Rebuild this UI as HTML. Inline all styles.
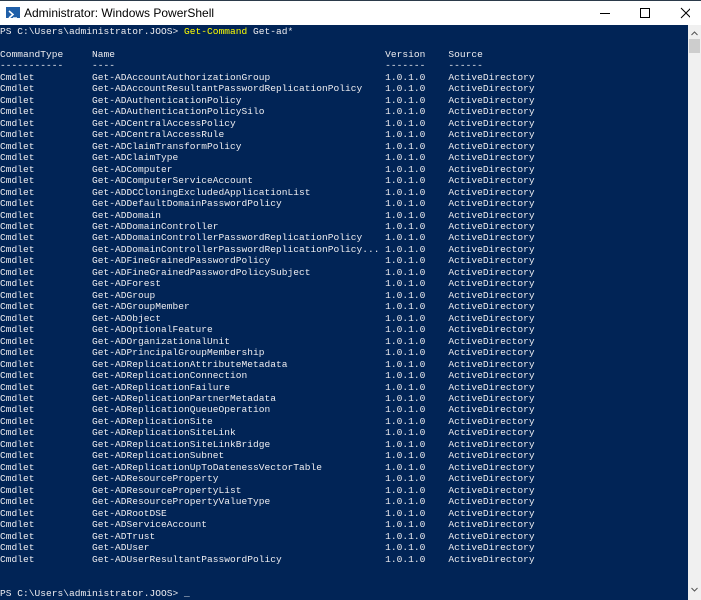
<!DOCTYPE html>
<html><head><style>
html,body{margin:0;width:701px;height:600px;overflow:hidden}
body{background:#012456;position:relative;font-family:"Liberation Sans",sans-serif}
#tb{position:absolute;left:0;top:0;width:701px;height:25px;background:#fff;border-top:1px solid #2b3a4a;box-sizing:border-box}
#tb .t{position:absolute;left:24px;top:5px;font-size:12px;color:#000}
#ic{position:absolute;left:6px;top:6px;width:14px;height:11px;background:#1f5fa8}
#sb{position:absolute;left:688px;top:25px;width:13px;height:575px;background:#f0f0f0}
pre{position:absolute;left:0;top:26px;margin:0;font-family:"Liberation Mono",monospace;font-size:9.55px;letter-spacing:0.02px;line-height:11.47px;color:#eeedf0}
.y{color:#ffff00}
</style></head><body>
<div id="tb"><div id="ic"><svg width="14" height="11"><path d="M3 2 L7 5.5 L3 9" stroke="#fff" stroke-width="1.6" fill="none"/><path d="M7 9 H11" stroke="#fff" stroke-width="1.4"/></svg></div><div class="t">Administrator: Windows PowerShell</div>
<svg style="position:absolute;left:600px;top:5px" width="90" height="15"><path d="M0 7.5H10" stroke="#000"/><rect x="40.5" y="2.5" width="9" height="9" fill="none" stroke="#000"/><path d="M81 2L91 12M91 2L81 12" stroke="#000"/></svg></div>
<div id="sb"><svg width="13" height="575"><path d="M3.5 10L6.5 7L9.5 10" stroke="#555" fill="none"/><rect x="1" y="14" width="11" height="14" fill="#cdcdcd"/><path d="M3.5 563L6.5 566L9.5 563" stroke="#555" fill="none"/></svg></div>
<pre>PS C:\Users\administrator.JOOS&gt; <span class="y">Get-Command</span> Get-ad*

CommandType     Name                                               Version    Source
-----------     ----                                               -------    ------
Cmdlet          Get-ADAccountAuthorizationGroup                    1.0.1.0    ActiveDirectory
Cmdlet          Get-ADAccountResultantPasswordReplicationPolicy    1.0.1.0    ActiveDirectory
Cmdlet          Get-ADAuthenticationPolicy                         1.0.1.0    ActiveDirectory
Cmdlet          Get-ADAuthenticationPolicySilo                     1.0.1.0    ActiveDirectory
Cmdlet          Get-ADCentralAccessPolicy                          1.0.1.0    ActiveDirectory
Cmdlet          Get-ADCentralAccessRule                            1.0.1.0    ActiveDirectory
Cmdlet          Get-ADClaimTransformPolicy                         1.0.1.0    ActiveDirectory
Cmdlet          Get-ADClaimType                                    1.0.1.0    ActiveDirectory
Cmdlet          Get-ADComputer                                     1.0.1.0    ActiveDirectory
Cmdlet          Get-ADComputerServiceAccount                       1.0.1.0    ActiveDirectory
Cmdlet          Get-ADDCCloningExcludedApplicationList             1.0.1.0    ActiveDirectory
Cmdlet          Get-ADDefaultDomainPasswordPolicy                  1.0.1.0    ActiveDirectory
Cmdlet          Get-ADDomain                                       1.0.1.0    ActiveDirectory
Cmdlet          Get-ADDomainController                             1.0.1.0    ActiveDirectory
Cmdlet          Get-ADDomainControllerPasswordReplicationPolicy    1.0.1.0    ActiveDirectory
Cmdlet          Get-ADDomainControllerPasswordReplicationPolicy... 1.0.1.0    ActiveDirectory
Cmdlet          Get-ADFineGrainedPasswordPolicy                    1.0.1.0    ActiveDirectory
Cmdlet          Get-ADFineGrainedPasswordPolicySubject             1.0.1.0    ActiveDirectory
Cmdlet          Get-ADForest                                       1.0.1.0    ActiveDirectory
Cmdlet          Get-ADGroup                                        1.0.1.0    ActiveDirectory
Cmdlet          Get-ADGroupMember                                  1.0.1.0    ActiveDirectory
Cmdlet          Get-ADObject                                       1.0.1.0    ActiveDirectory
Cmdlet          Get-ADOptionalFeature                              1.0.1.0    ActiveDirectory
Cmdlet          Get-ADOrganizationalUnit                           1.0.1.0    ActiveDirectory
Cmdlet          Get-ADPrincipalGroupMembership                     1.0.1.0    ActiveDirectory
Cmdlet          Get-ADReplicationAttributeMetadata                 1.0.1.0    ActiveDirectory
Cmdlet          Get-ADReplicationConnection                        1.0.1.0    ActiveDirectory
Cmdlet          Get-ADReplicationFailure                           1.0.1.0    ActiveDirectory
Cmdlet          Get-ADReplicationPartnerMetadata                   1.0.1.0    ActiveDirectory
Cmdlet          Get-ADReplicationQueueOperation                    1.0.1.0    ActiveDirectory
Cmdlet          Get-ADReplicationSite                              1.0.1.0    ActiveDirectory
Cmdlet          Get-ADReplicationSiteLink                          1.0.1.0    ActiveDirectory
Cmdlet          Get-ADReplicationSiteLinkBridge                    1.0.1.0    ActiveDirectory
Cmdlet          Get-ADReplicationSubnet                            1.0.1.0    ActiveDirectory
Cmdlet          Get-ADReplicationUpToDatenessVectorTable           1.0.1.0    ActiveDirectory
Cmdlet          Get-ADResourceProperty                             1.0.1.0    ActiveDirectory
Cmdlet          Get-ADResourcePropertyList                         1.0.1.0    ActiveDirectory
Cmdlet          Get-ADResourcePropertyValueType                    1.0.1.0    ActiveDirectory
Cmdlet          Get-ADRootDSE                                      1.0.1.0    ActiveDirectory
Cmdlet          Get-ADServiceAccount                               1.0.1.0    ActiveDirectory
Cmdlet          Get-ADTrust                                        1.0.1.0    ActiveDirectory
Cmdlet          Get-ADUser                                         1.0.1.0    ActiveDirectory
Cmdlet          Get-ADUserResultantPasswordPolicy                  1.0.1.0    ActiveDirectory


PS C:\Users\administrator.JOOS&gt; _</pre>
</body></html>
